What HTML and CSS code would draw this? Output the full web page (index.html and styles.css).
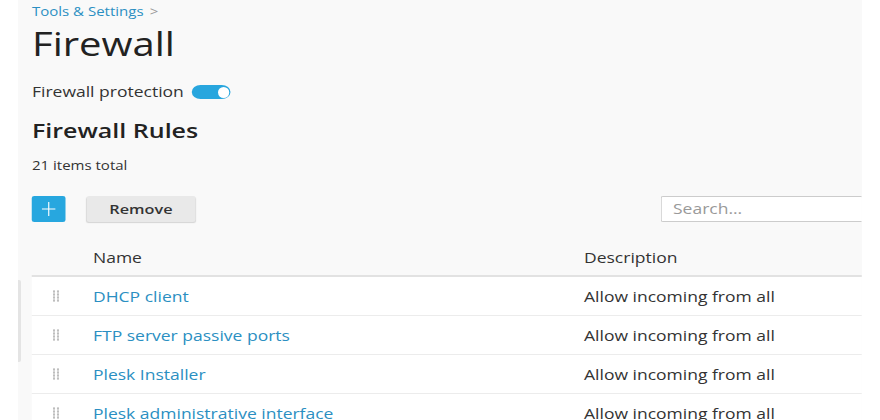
FILE: index.html
```html
<!DOCTYPE html>
<html>
<head>
<meta charset="utf-8">
<link rel="stylesheet" href="styles.css">
</head>
<body>
<div class="page">
  <div class="side"><div class="side-bar"></div></div>
  <main class="main">
    <div class="content">
      <nav class="crumbs"><a class="crumb-link">Tools &amp; Settings</a><span class="crumb-sep">&gt;</span></nav>
      <h1 class="title">Firewall</h1>
      <div class="protect">
        <span>Firewall protection</span>
        <span class="toggle"><span class="knob"></span></span>
      </div>
      <h2 class="subtitle">Firewall Rules</h2>
      <div class="total">21 items total</div>
      <div class="toolbar">
        <button class="btn-add"><svg width="11.2" height="14" viewBox="0 0 16 16" preserveAspectRatio="none"><path d="M8 0v16M0 8h16" stroke="#fff" stroke-width="1.3" fill="none"/></svg></button>
        <button class="btn-remove">Remove</button>
        <div class="spacer"></div>
        <div class="search">Search...</div>
      </div>
      <div class="table">
        <div class="thead">
          <div class="c-handle"></div>
          <div class="c-name">Name</div>
          <div class="c-desc">Description</div>
        </div>
        <div class="row">
          <div class="c-handle"><span class="grip"></span></div>
          <div class="c-name"><a class="link">DHCP client</a></div>
          <div class="c-desc">Allow incoming from all</div>
        </div>
        <div class="row">
          <div class="c-handle"><span class="grip"></span></div>
          <div class="c-name"><a class="link">FTP server passive ports</a></div>
          <div class="c-desc">Allow incoming from all</div>
        </div>
        <div class="row">
          <div class="c-handle"><span class="grip"></span></div>
          <div class="c-name"><a class="link">Plesk Installer</a></div>
          <div class="c-desc">Allow incoming from all</div>
        </div>
        <div class="row">
          <div class="c-handle"><span class="grip"></span></div>
          <div class="c-name"><a class="link">Plesk administrative interface</a></div>
          <div class="c-desc">Allow incoming from all</div>
        </div>
      </div>
    </div>
  </main>
</div>
</body>
</html>
```
FILE: styles.css
```css
* { box-sizing: border-box; }
html, body { margin: 0; padding: 0; background: #fff; }
body {
  font-family: "Open Sans", "Noto Sans", sans-serif;
  color: #333;
  width: 880px;
  height: 420px;
  overflow: hidden;
}
.page { display: flex; height: 420px; }
.side { width: 18px; flex: none; background: #fff; position: relative; z-index: 2; }
.side-bar { position: absolute; left: 18px; top: 280px; width: 3px; height: 82px; background: #e4e4e4; border-radius: 0 2px 2px 0; }
.main {
  width: 844px;
  flex: none;
  background: #f9f9f9;
  overflow: hidden;
}
/* the screenshot is horizontally stretched by 1.25 */
.content {
  width: 675.2px;
  padding-left: 11.2px;
  transform: scaleX(1.25);
  transform-origin: 0 0;
}
.crumbs { font-size: 12px; line-height: 18px; padding-top: 3px; display: flex; gap: 5px; }
.crumb-link { color: #2b8fc2; }
.crumb-sep { color: #999; }
.title { font-size: 32px; font-weight: 400; line-height: 40px; margin: 3px 0 0; color: #222; }
.protect { display: flex; align-items: center; gap: 6.4px; font-size: 14px; margin-top: 18px; line-height: 20px; }
.toggle { width: 31.2px; height: 14px; border-radius: 7px; background: #28a6de; position: relative; display: inline-block; }
.knob { position: absolute; right: 1.6px; top: 1.5px; width: 9px; height: 11px; border-radius: 50%; background: #fff; }
.subtitle { font-size: 20px; font-weight: 600; line-height: 28px; margin: 15px 0 0; color: #222; }
.total { font-size: 12px; line-height: 16px; margin-top: 13px; }
.toolbar { display: flex; align-items: center; margin-top: 22px; height: 26px; }
.btn-add { width: 27.2px; height: 26px; border: 0; border-radius: 2px; background: #27a7df; display: flex; align-items: center; justify-content: center; padding: 0; }
.btn-remove { margin-left: 16.8px; width: 86.4px; height: 26px; border: 0; border-radius: 2px; background: #e9e9e9; box-shadow: 0 1px 1px rgba(0,0,0,0.15); font-family: inherit; font-size: 13px; font-weight: 600; color: #333; padding: 0; }
.spacer { flex: 1; }
.search { width: 161px; flex: none; height: 26px; border: 1px solid #ccc; border-right: 0; border-radius: 2px 0 0 2px; background: #fff; font-size: 14px; color: #999; padding-left: 8.8px; line-height: 24px; }
.table { margin-top: 17px; }
.thead { display: flex; align-items: center; height: 38px; border-bottom: 2px solid #e2e2e2; font-size: 14px; }
.row { display: flex; align-items: center; height: 39px; background: #fff; border-bottom: 1px solid #ececec; font-size: 14px; }
.c-handle { width: 48.8px; flex: none; display: flex; padding-left: 16.8px; }
.c-name { width: 392.8px; flex: none; }
.c-desc { flex: 1; }
.link { color: #2b8fc2; }
.grip {
  width: 5px; height: 12px; display: block;
  background-image: radial-gradient(circle, #bdbdbd 1px, transparent 1.2px);
  background-size: 3.2px 3px;
  background-position: -0.8px 0;
}
```
